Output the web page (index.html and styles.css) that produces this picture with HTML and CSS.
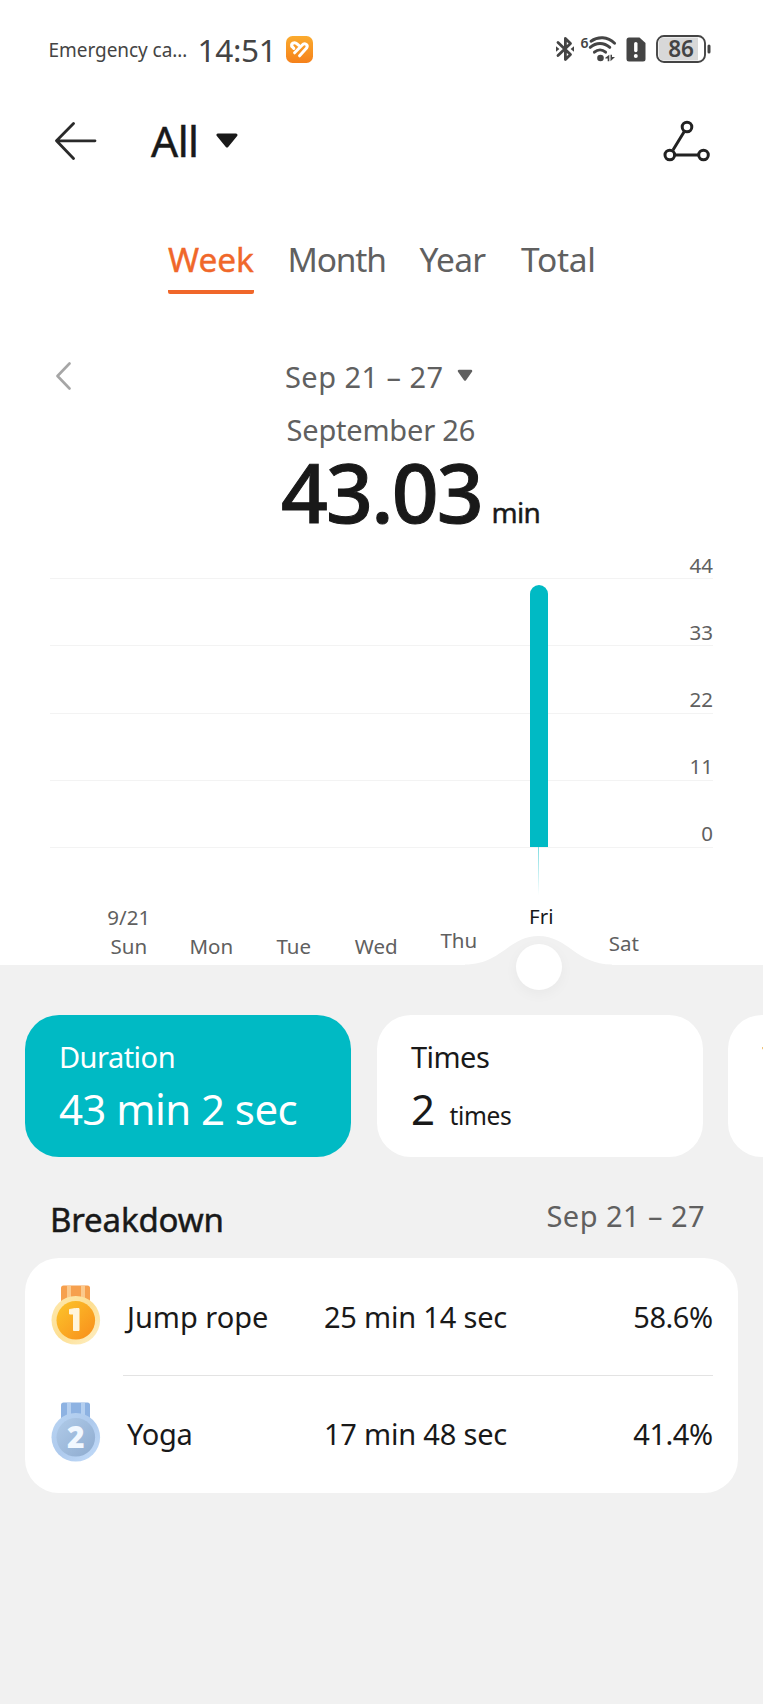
FILE: index.html
```html
<!DOCTYPE html>
<html lang="en">
<head>
<meta charset="utf-8">
<title>Exercise records</title>
<link rel="stylesheet" href="styles.css">
</head>
<body>
<main class="screen">
  <section class="top">
    <div class="status">
      <span class="carrier">Emergency ca…</span>
      <span class="clock">14:51</span>
      <svg class="app-icon" width="27" height="27" viewBox="0 0 27 27">
        <defs><linearGradient id="app" x1="0" y1="0" x2="0" y2="1"><stop offset="0" stop-color="#fbab2e"/><stop offset="1" stop-color="#f5811b"/></linearGradient></defs>
        <rect width="27" height="27" rx="6.5" fill="url(#app)"/>
        <g fill="none" stroke="#fff" stroke-width="3" stroke-linecap="round" stroke-linejoin="round">
          <path d="M6 10.500C4.600 7.600 8.400 5.400 11 7.800L12.800 9.400"/>
          <path d="M8.600 16.800L16 9.200C18.600 6.400 22.600 8.400 20.600 12L13.600 19.800"/>
          <path d="M6 10.500L7.800 12.400"/>
        </g>
      </svg>
      <div class="status-icons">
        <svg width="18" height="26" viewBox="0 0 18 26">
          <path d="M2 6.500L14.500 18.500L9.400 23.600V2.400L14.500 7.500L2 19.500" fill="none" stroke="#444" stroke-width="2.800" stroke-linejoin="round" stroke-linecap="round"/>
          <path d="M0 10.200L3.400 13L0 15.800ZM18 10.200L14.600 13L18 15.800Z" fill="#444"/>
        </svg>
        <svg class="wifi" width="36" height="26" viewBox="0 0 36 26">
          <text x="-.5" y="11.500" class="wifi-gen">6</text>
          <g fill="none" stroke="#444" stroke-width="2.900" stroke-linecap="round">
            <path d="M10 5.200C17 .2 26.500 .3 33.600 7.200"/>
            <path d="M9.200 11.400C15 6.200 23 6.200 28.800 11.400"/>
            <path d="M13.400 16.200C16.800 13.200 21.200 13.200 24.600 16.200"/>
          </g>
          <circle cx="19.500" cy="22" r="3.300" fill="#444"/>
          <path d="M24.300 21.700L28.300 18.700V25.300H26.700V22.600H24.300ZM29.500 18.700H31V21H34L29.500 25.300Z" fill="#444"/>
        </svg>
        <svg class="sim" width="20" height="25" viewBox="0 0 20 25">
          <path d="M3 .5H13.500L19.500 6V22Q19.500 24.500 17 24.500H3Q.5 24.500 .5 22V3Q.5 .5 3 .5Z" fill="#444"/>
          <path d="M9.800 6.600V13.500" stroke="#fff" stroke-width="3.400" stroke-linecap="round"/>
          <circle cx="9.800" cy="19" r="2" fill="#fff"/>
        </svg>
        <svg class="battery" width="55" height="28" viewBox="0 0 55 28">
          <rect x="1" y="1" width="48" height="26" rx="7" fill="#fff" stroke="#444" stroke-width="1.900"/>
          <path d="M8 2.600H42V25.400H8Q2.600 25.400 2.600 20V8Q2.600 2.600 8 2.600Z" fill="#d8d8d8"/>
          <path d="M53 11V17" stroke="#444" stroke-width="3" stroke-linecap="round"/>
          <text x="25" y="22.300" text-anchor="middle" class="battery-level">86</text>
        </svg>
      </div>
    </div>

    <header class="header">
      <svg width="42" height="38" viewBox="0 0 42 38">
        <path d="M18.500 1.500L1.500 18.800L18.500 36.500M1.500 18.800H40" fill="none" stroke="#2a2a2a" stroke-width="2.800" stroke-linecap="round" stroke-linejoin="round"/>
      </svg>
      <h1 class="title">All</h1>
      <svg class="title-caret" width="22" height="16" viewBox="0 0 22 16"><path d="M2 2H20L11 13Z" fill="#191919" stroke="#191919" stroke-width="3" stroke-linejoin="round"/></svg>
      <svg class="track" width="48" height="42" viewBox="0 0 48 42">
        <g fill="none" stroke="#222" stroke-width="3">
          <path d="M10 30L21 12M12 35H36"/>
          <circle cx="24" cy="7" r="4.800"/><circle cx="6.800" cy="35" r="4.800"/><circle cx="40.500" cy="35" r="4.800"/>
        </g>
      </svg>
    </header>

    <nav class="tabs">
      <span class="tab tab-week">Week</span>
      <span class="tab tab-month">Month</span>
      <span class="tab tab-year">Year</span>
      <span class="tab tab-total">Total</span>
    </nav>

    <div class="range">
      <svg width="16" height="28" viewBox="0 0 16 28"><path d="M14.500 1.500L2.500 14L14.500 26.500" fill="none" stroke="#a6a6a6" stroke-width="2.600" stroke-linecap="round" stroke-linejoin="round"/></svg>
      <span class="range-text">Sep 21 – 27</span>
      <svg class="range-caret" width="16" height="13" viewBox="0 0 16 13"><path d="M2 2H14L8 10.500Z" fill="#606060" stroke="#606060" stroke-width="2.500" stroke-linejoin="round"/></svg>
    </div>
    <div class="selected-day">September 26</div>
    <div class="total"><span class="total-value">43.03</span><span class="total-unit">min</span></div>

    <div class="chart">
      <div class="level">44</div>
      <div class="level">33</div>
      <div class="level">22</div>
      <div class="level">11</div>
      <div class="level">0</div>
      <div class="bar"></div>
      <div class="bar-tail"></div>
    </div>

    <svg class="bump" width="160" height="70" viewBox="0 0 160 70">
      <path d="M6 29.500C42 29.500 50 1 79.500 1C109 1 117 29.500 153 29.500V32H6Z" fill="#f1f1f1"/>
    </svg>
    <div class="days">
      <span class="day">9/21<br>Sun</span>
      <span class="day">Mon</span>
      <span class="day">Tue</span>
      <span class="day">Wed</span>
      <span class="day day-thu">Thu</span>
      <span class="day day-fri">Fri</span>
      <span class="day day-sat">Sat</span>
    </div>
    <div class="knob"></div>
  </section>

  <section class="cards">
    <article class="card card-active">
      <div class="card-label">Duration</div>
      <div class="card-value">43 min 2 sec</div>
    </article>
    <article class="card">
      <div class="card-label">Times</div>
      <div class="card-value">2<span class="card-unit">times</span></div>
    </article>
    <article class="card"><div class="card-label">T</div></article>
  </section>

  <div class="section-head">
    <h2 class="section-title">Breakdown</h2>
    <span class="section-range">Sep 21 – 27</span>
  </div>

  <section class="list">
    <div class="row">
      <svg class="medal" width="50" height="60" viewBox="0 0 50 60">
        <defs>
          <linearGradient id="g1" x1="0" y1="0" x2="1" y2="1"><stop offset="0" stop-color="#fcc52b"/><stop offset="1" stop-color="#f88d1b"/></linearGradient>
          <linearGradient id="r1" x1="0" y1="0" x2="1" y2="1"><stop offset="0" stop-color="#fde9b0"/><stop offset=".5" stop-color="#fddf93"/><stop offset="1" stop-color="#fef0c8"/></linearGradient>
        </defs>
        <path d="M10 18V3Q10 .5 12.500 .5H36.500Q39 .5 39 3V18Z" fill="#f6a04e"/>
        <path d="M16 1H20V18H16ZM30 1H34V18H30Z" fill="#fbc98c"/>
        <circle cx="24.800" cy="35.300" r="24.300" fill="url(#r1)"/>
        <circle cx="24.800" cy="35.300" r="19.300" fill="url(#g1)"/>
        <path d="M18.500 24.500L24.500 23.500H28V45.500H22.500V29H18.500Z" fill="#fff5dc" stroke="#fff5dc" stroke-width="1" stroke-linejoin="round"/>
      </svg>
      <span class="sport">Jump rope</span>
      <span class="time">25 min 14 sec</span>
      <span class="share">58.6%</span>
    </div>
    <div class="row">
      <svg class="medal" width="50" height="60" viewBox="0 0 50 60">
        <defs>
          <linearGradient id="g2" x1="0" y1="0" x2="1" y2="1"><stop offset="0" stop-color="#b0cbe9"/><stop offset="1" stop-color="#8eabcf"/></linearGradient>
          <linearGradient id="r2" x1="0" y1="0" x2="1" y2="1"><stop offset="0" stop-color="#b9d4f2"/><stop offset=".5" stop-color="#aecaed"/><stop offset="1" stop-color="#c3dcfa"/></linearGradient>
        </defs>
        <path d="M10 18V3Q10 .5 12.500 .5H36.500Q39 .5 39 3V18Z" fill="#8db2e2"/>
        <path d="M16 1H20V18H16ZM30 1H34V18H30Z" fill="#b4cff0"/>
        <circle cx="24.800" cy="35.300" r="24.300" fill="url(#r2)"/>
        <circle cx="24.800" cy="35.300" r="19.300" fill="url(#g2)"/>
        <text x="24.800" y="45.500" text-anchor="middle" class="medal-number">2</text>
      </svg>
      <span class="sport sport-yoga">Yoga</span>
      <span class="time">17 min 48 sec</span>
      <span class="share">41.4%</span>
    </div>
  </section>
</main>
</body>
</html>
```
FILE: styles.css
```css
* { box-sizing: border-box; }

body {
  margin: 0;
  background: #f1f1f1;
  color: #191919;
  font-family: "Noto Sans", "Open Sans", sans-serif;
  -webkit-font-smoothing: antialiased;
}

svg { display: block; flex: none; }

.screen {
  width: 763px;
  height: 1704px;
  overflow: hidden;
}

.top {
  position: relative;
  height: 964.5px;
  background: #fff;
}

/* Status bar */
.status {
  display: flex;
  align-items: center;
  height: 98px;
  padding-left: 48.500px;
  color: #444;
  white-space: nowrap;
}
.carrier { width: 149px; padding-top: 1px; font-size: 19px; letter-spacing: -0.050px; }
.clock { width: 88.500px; font-size: 31.500px; letter-spacing: -0.300px; }
.status-icons { display: flex; align-items: center; margin-left: 243px; }
.wifi { margin-left: 7px; overflow: visible; }
.sim { margin-left: 9px; }
.battery { margin-left: 10px; overflow: visible; }
.wifi-gen { font-size: 14px; font-weight: 600; fill: #444; }
.battery-level { font-size: 22.500px; font-weight: 600; fill: #444; }

/* Title bar */
.header {
  display: flex;
  align-items: center;
  height: 86px;
  padding: 0 52px 0 54.500px;
}
.title {
  width: 64px;
  margin: 0 0 0 54.500px;
  font-size: 42.500px;
  font-weight: 400;
  line-height: 88px;
  letter-spacing: -0.500px;
  -webkit-text-stroke: 0.500px;
}
.title-caret { margin-left: 1px; }
.track { margin-left: auto; }

/* Period tabs */
.tabs {
  display: flex;
  gap: 34px;
  height: 110px;
  padding: 50px 0 0 168px;
  color: #606060;
  font-size: 33.500px;
  line-height: 51px;
  white-space: nowrap;
}
.tab { height: 60px; letter-spacing: -0.300px; }
.tab-week {
  width: 86px;
  border-bottom: 4.500px solid #f0672a;
  border-radius: 0 0 2px 2px;
  color: #f0672a;
  letter-spacing: -0.100px;
  -webkit-text-stroke: 0.400px;
}
.tab-month { width: 98px; margin-left: -0.500px; letter-spacing: -1.200px; }
.tab-year { width: 67.500px; letter-spacing: -0.700px; }

/* Date range and total */
.range {
  display: flex;
  align-items: center;
  height: 50px;
  margin-top: 57px;
  padding-left: 55px;
  color: #606060;
  font-size: 29px;
}
.range-text { width: 172px; margin-left: 214px; letter-spacing: 0.450px; white-space: nowrap; }
.range-caret { margin-top: -2px; }
.selected-day {
  height: 56px;
  padding-left: 286.500px;
  color: #606060;
  font-size: 29px;
  line-height: 57px;
  letter-spacing: -0.200px;
}
.total {
  display: flex;
  align-items: baseline;
  height: 55px;
  padding-left: 281px;
  line-height: 69px;
  white-space: nowrap;
}
.total-value { width: 210.500px; font-size: 82px; font-weight: 500; letter-spacing: -1.800px; -webkit-text-stroke: 1px; }
.total-unit { font-size: 28px; letter-spacing: -0.700px; -webkit-text-stroke: 0.400px; }

/* Chart */
.chart {
  position: relative;
  height: 336px;
  margin: 0 50px;
  color: #606060;
}
.level {
  height: 67.200px;
  padding-top: 39.500px;
  border-bottom: 1.500px solid #f3f3f3;
  font-size: 20.500px;
  line-height: 26px;
  text-align: right;
}
.bar {
  position: absolute;
  left: 479.500px;
  bottom: 1px;
  width: 18px;
  height: 262px;
  border-radius: 9px 9px 0 0;
  background: #00bac4;
}
.bar-tail {
  position: absolute;
  left: 488px;
  top: 335px;
  width: 1px;
  height: 48px;
  background: linear-gradient(#7fdce1, #fff);
}

/* Weekday axis */
.days {
  display: grid;
  position: relative;
  grid-template-columns: repeat(7, 82.500px);
  align-items: end;
  height: 113px;
  padding-left: 87.500px;
  color: #606060;
  font-size: 20.500px;
  line-height: 29px;
  text-align: center;
}
.day-thu { padding-bottom: 6px; }
.day-fri { padding-bottom: 30px; color: #191919; }
.day-sat { padding-bottom: 3px; }
.bump { position: absolute; left: 459px; top: 935px; }
.knob {
  position: absolute;
  left: 515.500px;
  top: 944px;
  width: 46px;
  height: 46px;
  border-radius: 50%;
  background: #fff;
  box-shadow: 0 4px 14px rgba(0, 0, 0, 0.040);
}

/* Metric cards */
.cards {
  display: flex;
  gap: 25.500px;
  margin-top: 50px;
  padding-left: 25.400px;
}
.card {
  flex: none;
  width: 326px;
  height: 142px;
  padding: 22px 34px 0;
  border-radius: 34px;
  background: #fff;
  white-space: nowrap;
}
.card-active { padding-left: 33.500px; background: #00bac4; color: #fff; }
.card-label { font-size: 29px; line-height: 40px; letter-spacing: -0.500px; }
.card-value { font-size: 42px; line-height: 63px; letter-spacing: -0.550px; }
.card-unit { margin-left: 15px; font-size: 24.500px; letter-spacing: -0.300px; }

/* Breakdown */
.section-head {
  display: flex;
  justify-content: space-between;
  height: 101px;
  padding: 37px 58px 0 50px;
}
.section-title {
  margin: 0;
  font-size: 33px;
  font-weight: 400;
  line-height: 51px;
  letter-spacing: -0.150px;
  -webkit-text-stroke: 0.500px;
}
.section-range { color: #606060; font-size: 29px; line-height: 43px; letter-spacing: 0.450px; }
.list {
  width: 712.500px;
  height: 235px;
  margin-left: 25px;
  padding: 0 25px;
  border-radius: 34px;
  background: #fff;
}
.row {
  display: flex;
  position: relative;
  align-items: center;
  height: 117.500px;
  font-size: 29px;
  white-space: nowrap;
}
.row + .row::before {
  content: "";
  position: absolute;
  top: 0;
  left: 73px;
  right: 0;
  height: 1px;
  background: #e3e3e3;
}
.medal { margin-top: -3px; margin-left: 0.700px; }
.sport { width: 197px; margin-left: 26.300px; }
.sport-yoga { letter-spacing: -0.300px; }
.time { letter-spacing: -0.200px; }
.share { margin-left: auto; letter-spacing: -0.500px; }
.medal-number { font-size: 30px; font-weight: 900; fill: #f2f8ff; }
```
